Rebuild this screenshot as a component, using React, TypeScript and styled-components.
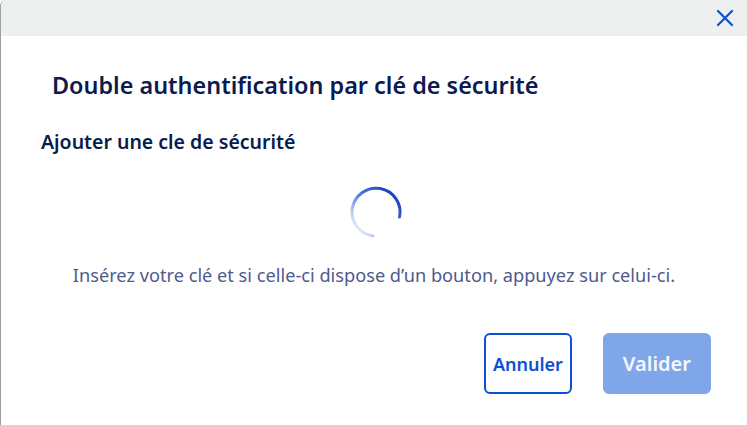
import React from "react";
import styled, { createGlobalStyle } from "styled-components";

const Global = createGlobalStyle`
  html, body { margin: 0; padding: 0; background: #ffffff; }
  body { font-family: "Noto Sans", "Lato", sans-serif; }
  * { box-sizing: border-box; }
`;

const Modal = styled.div`
  width: 747px;
  height: 425px;
  background: #ffffff;
  border-left: 1px solid #9aa0a8;
  border-top-left-radius: 6px;
  display: flex;
  flex-direction: column;
  overflow: hidden;
`;

const Header = styled.div`
  height: 36px;
  background: #eef0ef;
  display: flex;
  justify-content: flex-end;
  align-items: center;
  padding-right: 12px;
`;

const CloseButton = styled.button`
  border: none;
  background: transparent;
  padding: 0;
  width: 20px;
  height: 20px;
  display: flex;
  align-items: center;
  justify-content: center;
  cursor: pointer;
`;

const Body = styled.div`
  flex: 1;
  display: flex;
  flex-direction: column;
`;

const Title = styled.h1`
  margin: 0;
  padding: 35px 0 0 51px;
  font-size: 23.4px;
  font-weight: 600;
  color: #0b1a4f;
  line-height: 28px;
`;

const Subtitle = styled.h2`
  margin: 0;
  padding: 31px 0 0 40px;
  font-size: 19.5px;
  font-weight: 600;
  color: #0b1a4f;
  line-height: 24px;
`;

const SpinnerRow = styled.div`
  display: flex;
  justify-content: center;
  padding: 31px 0 0 4px;
`;

const Message = styled.p`
  margin: 0;
  padding-top: 24px;
  text-align: center;
  font-size: 18.2px;
  color: #4f5a8d;
  line-height: 24px;
`;

const Actions = styled.div`
  display: flex;
  justify-content: flex-end;
  gap: 31px;
  padding: 46px 36px 0 0;
`;

const Button = styled.button<{ $variant: "outline" | "primary" }>`
  height: 61px;
  border-radius: 6px;
  font-family: "Noto Sans", "Lato", sans-serif;
  font-weight: 600;
  font-size: ${(p) => (p.$variant === "primary" ? "20px" : "18px")};
  padding: 0 ${(p) => (p.$variant === "primary" ? "18px" : "7px")};
  border: 2px solid ${(p) => (p.$variant === "primary" ? "#7ea6e8" : "#0b50d0")};
  background: ${(p) => (p.$variant === "primary" ? "#7ea6e8" : "#ffffff")};
  color: ${(p) => (p.$variant === "primary" ? "#f4f7fd" : "#0b50d0")};
  cursor: pointer;
`;

const Spinner = () => (
  <svg width="54" height="54" viewBox="0 0 54 54">
    <defs>
      <linearGradient id="sg" x1="1" y1="0.2" x2="0.15" y2="1">
        <stop offset="0" stopColor="#1a3db8" />
        <stop offset="0.45" stopColor="#2a5ad6" stopOpacity="0.85" />
        <stop offset="1" stopColor="#2a5ad6" stopOpacity="0.04" />
      </linearGradient>
    </defs>
    <path
      d="M 50.5 32 A 24 24 0 1 0 24 51"
      fill="none"
      stroke="url(#sg)"
      strokeWidth="3"
      strokeLinecap="round"
    />
  </svg>
);

export default function App() {
  return (
    <>
      <Global />
      <Modal>
        <Header>
          <CloseButton aria-label="Fermer">
            <svg width="18" height="18" viewBox="0 0 18 18">
              <path d="M2 2 L16 16 M16 2 L2 16" stroke="#0b50d0" strokeWidth="2.2" strokeLinecap="round" />
            </svg>
          </CloseButton>
        </Header>
        <Body>
          <Title>Double authentification par clé de sécurité</Title>
          <Subtitle>Ajouter une cle de sécurité</Subtitle>
          <SpinnerRow>
            <Spinner />
          </SpinnerRow>
          <Message>Insérez votre clé et si celle-ci dispose d’un bouton, appuyez sur celui-ci.</Message>
          <Actions>
            <Button $variant="outline">Annuler</Button>
            <Button $variant="primary">Valider</Button>
          </Actions>
        </Body>
      </Modal>
    </>
  );
}
